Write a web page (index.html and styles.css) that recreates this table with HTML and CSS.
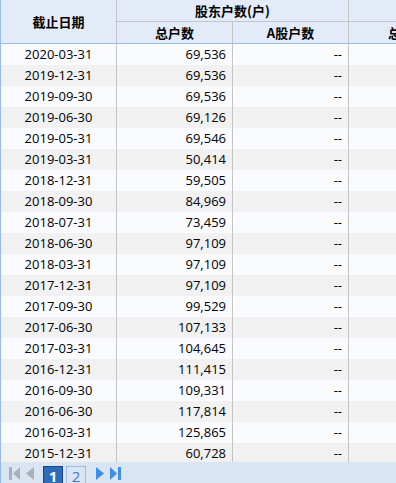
FILE: index.html
```html
<!DOCTYPE html>
<html>
<head>
<meta charset="utf-8">
<link rel="stylesheet" href="styles.css">
</head>
<body>
<div class="grid">
  <div class="scroll">
    <table class="tbl">
      <colgroup><col class="c"><col class="c"><col class="c"><col class="c"></colgroup>
      <thead>
        <tr class="h1">
          <th rowspan="2" class="hd-date">截止日期</th>
          <th colspan="2">股东户数(户)</th>
          <th></th>
        </tr>
        <tr class="h2">
          <th>总户数</th>
          <th>A股户数</th>
          <th class="cut">总</th>
        </tr>
      </thead>
      <tbody>
        <tr><td class="d">2020-03-31</td><td>69,536</td><td>--</td><td></td></tr>
        <tr><td class="d">2019-12-31</td><td>69,536</td><td>--</td><td></td></tr>
        <tr><td class="d">2019-09-30</td><td>69,536</td><td>--</td><td></td></tr>
        <tr><td class="d">2019-06-30</td><td>69,126</td><td>--</td><td></td></tr>
        <tr><td class="d">2019-05-31</td><td>69,546</td><td>--</td><td></td></tr>
        <tr><td class="d">2019-03-31</td><td>50,414</td><td>--</td><td></td></tr>
        <tr><td class="d">2018-12-31</td><td>59,505</td><td>--</td><td></td></tr>
        <tr><td class="d">2018-09-30</td><td>84,969</td><td>--</td><td></td></tr>
        <tr><td class="d">2018-07-31</td><td>73,459</td><td>--</td><td></td></tr>
        <tr><td class="d">2018-06-30</td><td>97,109</td><td>--</td><td></td></tr>
        <tr><td class="d">2018-03-31</td><td>97,109</td><td>--</td><td></td></tr>
        <tr><td class="d">2017-12-31</td><td>97,109</td><td>--</td><td></td></tr>
        <tr><td class="d">2017-09-30</td><td>99,529</td><td>--</td><td></td></tr>
        <tr><td class="d">2017-06-30</td><td>107,133</td><td>--</td><td></td></tr>
        <tr><td class="d">2017-03-31</td><td>104,645</td><td>--</td><td></td></tr>
        <tr><td class="d">2016-12-31</td><td>111,415</td><td>--</td><td></td></tr>
        <tr><td class="d">2016-09-30</td><td>109,331</td><td>--</td><td></td></tr>
        <tr><td class="d">2016-06-30</td><td>117,814</td><td>--</td><td></td></tr>
        <tr><td class="d">2016-03-31</td><td>125,865</td><td>--</td><td></td></tr>
        <tr><td class="d">2015-12-31</td><td>60,728</td><td>--</td><td></td></tr>
      </tbody>
    </table>
  </div>
  <div class="pager">
    <svg class="ico" width="11" height="13" viewBox="0 0 11 13"><rect x="0" y="0" width="3" height="13" fill="#a9b0b8"/><polygon points="11,0 11,13 4,6.5" fill="#a9b0b8"/></svg>
    <svg class="ico prev" width="8" height="13" viewBox="0 0 8 13"><polygon points="8,0 8,13 0,6.5" fill="#a9b0b8"/></svg>
    <span class="pg on">1</span>
    <span class="pg">2</span>
    <svg class="ico next" width="8" height="13" viewBox="0 0 8 13"><polygon points="0,0 0,13 8,6.5" fill="#3d8fe8"/></svg>
    <svg class="ico last" width="11" height="13" viewBox="0 0 11 13"><polygon points="0,0 0,13 7,6.5" fill="#3d8fe8"/><rect x="8" y="0" width="3" height="13" fill="#3d8fe8"/></svg>
  </div>
</div>
</body>
</html>
```

FILE: styles.css
```css
html, body {
  margin: 0;
  padding: 0;
  background: #ffffff;
}
.grid {
  width: 396px;
  height: 483px;
  overflow: hidden;
  border-left: 1px solid #99bbe8;
  box-sizing: border-box;
  display: flex;
  flex-direction: column;
}
.scroll {
  height: 462px;
  overflow: hidden;
  flex: none;
}
.tbl {
  table-layout: fixed;
  border-collapse: separate;
  border-spacing: 0;
  width: 464px;
  font-family: "Open Sans", "Noto Sans CJK SC", sans-serif;
  font-size: 13px;
  color: #000;
}
.c { width: 116px; }
.tbl th, .tbl td {
  box-sizing: border-box;
  padding: 0 5px;
  border-right: 1px solid #c5c5c5;
  white-space: nowrap;
  overflow: hidden;
}
.tbl th {
  background: #e2ebf7;
  font-family: "Noto Sans CJK SC", sans-serif;
  font-weight: bold;
  font-size: 13px;
  text-align: center;
  line-height: 21px;
  height: 22px;
  border-bottom: 1px solid #c5c5c5;
}
.tbl tr.h2 th {
  border-bottom: 1px solid #99bbe8;
}
.tbl th.hd-date {
  border-bottom: 1px solid #99bbe8;
}
.tbl th.cut {
  text-align: left;
  padding-left: 39px;
}
.tbl td {
  height: 21px;
  line-height: 21px;
  text-align: right;
  padding-right: 6px;
}
.tbl td.d {
  text-align: center;
  padding: 0;
}
.tbl tbody tr:nth-child(odd) td { background: #fafbfe; }
.tbl tbody tr:nth-child(even) td { background: #f1f1f1; }
.pager {
  flex: 1;
  background: #d9e5f3;
  display: flex;
  align-items: flex-start;
  padding-top: 4px;
  padding-left: 8px;
  box-sizing: border-box;
  font-family: "Open Sans", sans-serif;
}
.ico { display: block; margin-top: 1px; }
.prev { margin-left: 6px; }
.pg {
  box-sizing: border-box;
  width: 20px;
  height: 17px;
  margin-left: 3px;
  border: 1px solid #a3bde0;
  border-bottom: none;
  color: #3a7bd0;
  font-size: 15px;
  line-height: 19px;
  text-align: center;
}
.pg.on {
  margin-left: 9px;
  background: #2d6cb8;
  border-color: #1c3f86;
  color: #ffffff;
  font-weight: bold;
}
.next { margin-left: 10px; }
.last { margin-left: 6px; }
```
